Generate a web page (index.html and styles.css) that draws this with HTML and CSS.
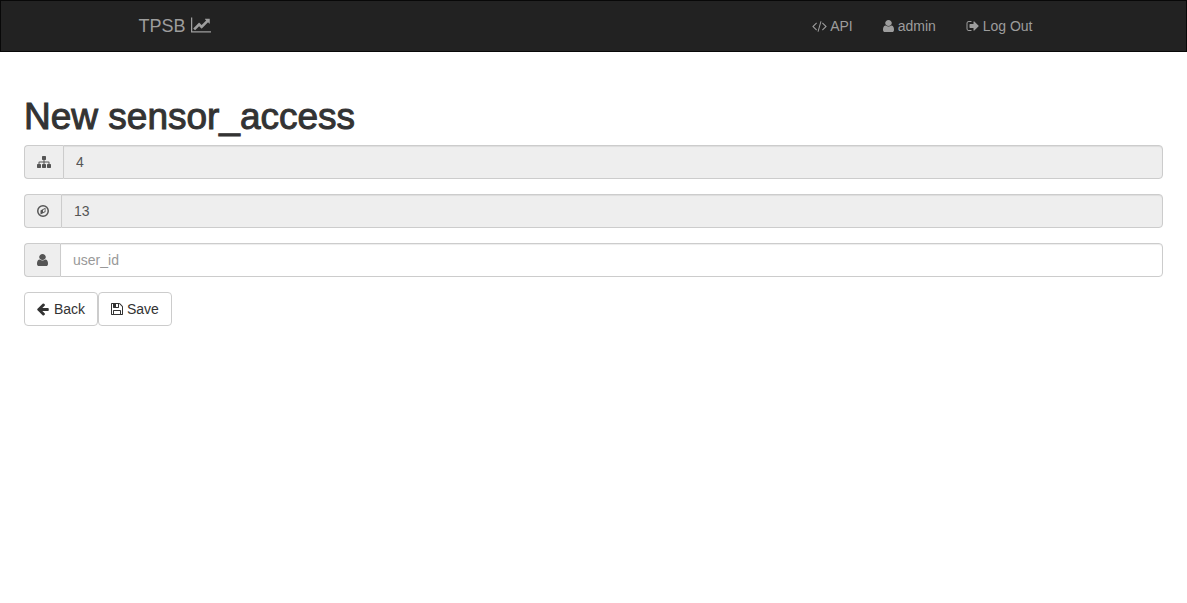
FILE: index.html
```html
<!DOCTYPE html>
<html lang="en">
<head>
<meta charset="utf-8">
<meta name="viewport" content="width=device-width, initial-scale=1">
<title>TPSB</title>
<link rel="stylesheet" href="styles.css">
</head>
<body>
<svg class="sprite" aria-hidden="true">
  <symbol id="user" viewBox="256 128 1280 1536" preserveAspectRatio="none"><path d="M1536 1399q0 109-62.5 187t-150.5 78h-854q-88 0-150.5-78t-62.5-187q0-85 8.5-160.5t31.5-152 58.5-131 94-89 134.5-34.5q131 128 313 128t313-128q76 0 134.5 34.5t94 89 58.5 131 31.5 152 8.5 160.5zm-256-887q0 159-112.5 271.5t-271.5 112.5-271.5-112.5-112.5-271.5 112.5-271.5 271.5-112.5 271.5 112.5 112.5 271.5z"/></symbol>
</svg>
<header class="navbar">
  <div class="navbar-inner">
    <a class="brand" href="#">TPSB <svg class="icon icon-chart" viewBox="0 0 2048 1792" aria-hidden="true"><path d="M2048 1536v128h-2048v-1536h128v1408h1920zm-128-1248v435q0 21-19.5 29.5t-35.5-7.5l-121-121-633 633q-10 10-23 10t-23-10l-233-233-416 416-192-192 585-585q10-10 23-10t23 10l233 233 464-464-121-121q-16-16-7.5-35.5t29.5-19.5h435q14 0 23 9t9 23z"/></svg></a>
    <nav class="nav">
      <a class="nav-link" href="#"><svg class="icon icon-code" viewBox="0 0 1920 1792" aria-hidden="true"><path d="M617 1399l-50 50q-10 10-23 10t-23-10l-466-466q-10-10-10-23t10-23l466-466q10-10 23-10t23 10l50 50q10 10 10 23t-10 23l-393 393 393 393q10 10 10 23t-10 23zm591-1067l-373 1291q-4 13-15.5 19.5t-23.5 2.5l-62-17q-13-4-19.5-15.5t-2.5-24.5l373-1291q4-13 15.5-19.5t23.5-2.5l62 17q13 4 19.5 15.5t2.5 24.5zm657 651l-466 466q-10 10-23 10t-23-10l-50-50q-10-10-10-23t10-23l393-393-393-393q-10-10-10-23t10-23l50-50q10-10 23-10t23 10l466 466q10 10 10 23t-10 23z"/></svg> API</a>
      <a class="nav-link" href="#"><svg class="icon icon-user" aria-hidden="true"><use href="#user"/></svg> admin</a>
      <a class="nav-link" href="#"><svg class="icon icon-wide" viewBox="0 0 1664 1792" aria-hidden="true"><path d="M704 1440q0 4 1 20t.5 26.5-3 23.5-10 19.5-20.5 6.5h-320q-119 0-203.5-84.5t-84.5-203.5v-704q0-119 84.5-203.5t203.5-84.5h320q13 0 22.5 9.5t9.5 22.5q0 4 1 20t.5 26.5-3 23.5-10 19.5-20.5 6.5h-320q-66 0-113 47t-47 113v704q0 66 47 113t113 47h312l11.5 1 11.5 3 8 5.5 7 9 2 13.5zm928-544q0 26-19 45l-544 544q-19 19-45 19t-45-19-19-45v-288h-448q-26 0-45-19t-19-45v-384q0-26 19-45t45-19h448v-288q0-26 19-45t45-19 45 19l544 544q19 19 19 45z"/></svg> Log Out</a>
    </nav>
  </div>
</header>
<main class="content">
  <h1 class="title">New sensor_access</h1>
  <form class="form">
    <div class="input-group">
      <label class="addon" for="network" aria-label="network_id"><svg class="icon icon-full" viewBox="0 0 1792 1792" aria-hidden="true"><path d="M1792 1248v320q0 40-28 68t-68 28h-320q-40 0-68-28t-28-68v-320q0-40 28-68t68-28h96v-192h-512v192h96q40 0 68 28t28 68v320q0 40-28 68t-68 28h-320q-40 0-68-28t-28-68v-320q0-40 28-68t68-28h96v-192h-512v192h96q40 0 68 28t28 68v320q0 40-28 68t-68 28h-320q-40 0-68-28t-28-68v-320q0-40 28-68t68-28h96v-192q0-52 38-90t90-38h512v-192h-96q-40 0-68-28t-28-68v-320q0-40 28-68t68-28h320q40 0 68 28t28 68v320q0 40-28 68t-68 28h-96v192h512q52 0 90 38t38 90v192h96q40 0 68 28t28 68z"/></svg></label>
      <input class="control" id="network" type="text" value="4" readonly>
    </div>
    <div class="input-group">
      <label class="addon" for="sensor" aria-label="sensor_id"><svg class="icon icon-narrow" viewBox="0 0 1536 1792" aria-hidden="true"><circle class="ring" cx="768" cy="896" r="672"/><path fill-rule="evenodd" d="M1088 480v530l-320 180-320 160v-530l320-180zM768 1050l220-120v-280l-220 120z"/></svg></label>
      <input class="control" id="sensor" type="text" value="13" readonly>
    </div>
    <div class="input-group">
      <label class="addon" for="user_id" aria-label="user_id"><svg class="icon icon-user" aria-hidden="true"><use href="#user"/></svg></label>
      <input class="control" id="user_id" type="text" placeholder="user_id">
    </div>
    <div class="actions">
      <button class="btn" type="button"><svg class="icon icon-wide" viewBox="160 0 1664 1792" aria-hidden="true"><path d="M1664 896v128q0 53-32.5 90.5t-84.5 37.5h-704l293 294q38 36 38 90t-38 90l-75 76q-37 37-90 37-52 0-91-37l-651-652q-37-37-37-90 0-52 37-91l651-650q38-38 91-38 52 0 90 38l75 74q38 38 38 91t-38 91l-293 293h704q52 0 84.5 37.5t32.5 90.5z"/></svg> Back</button>
      <button class="btn" type="submit"><svg class="icon icon-narrow" viewBox="128 0 1536 1792" aria-hidden="true"><path d="M512 1536h768v-384h-768v384zm896 0h128v-896q0-14-10-38.5t-20-34.5l-281-281q-10-10-34-20t-39-10v416q0 40-28 68t-68 28h-576q-40 0-68-28t-28-68v-416h-128v1280h128v-416q0-40 28-68t68-28h832q40 0 68 28t28 68v416zm-384-928v-320q0-13-9.5-22.5t-22.5-9.5h-192q-13 0-22.5 9.5t-9.5 22.5v320q0 13 9.5 22.5t22.5 9.5h192q13 0 22.5-9.5t9.5-22.5zm640 32v928q0 40-28 68t-68 28h-1344q-40 0-68-28t-28-68v-1344q0-40 28-68t68-28h928q40 0 88 20t76 48l280 280q28 28 48 76t20 88z"/></svg> Save</button>
    </div>
  </form>
</main>
</body>
</html>
```
FILE: styles.css
```css
*, *::before, *::after { box-sizing: border-box; }

body {
  margin: 0;
  background: #fff;
  color: #333;
  font: 14px/20px "Liberation Sans", Arial, sans-serif;
}

.sprite { display: none; }

.icon {
  height: 14px;
  fill: currentColor;
  vertical-align: -2px;
}
.icon-full { width: 14px; }
.icon-wide { width: 13px; }
.icon-narrow { width: 12px; }
.icon-code { width: 15px; }
.icon-user { width: 11px; height: 12px; vertical-align: -1px; }
.icon-chart { width: 20px; height: 18px; vertical-align: -2px; }
.ring { fill: none; stroke: currentColor; stroke-width: 190; }

.navbar {
  background: #222;
  border: 1px solid #080808;
}
.navbar-inner {
  display: flex;
  justify-content: space-between;
  max-width: 970px;
  margin: 0 auto;
  padding: 0 31px 0 30px;
}
.brand, .nav-link {
  color: #9d9d9d;
  text-decoration: none;
  padding-top: 15px;
  padding-bottom: 15px;
}
.brand { font-size: 18px; }
.nav { display: flex; }
.nav-link { padding-left: 15px; padding-right: 15px; }

.content { padding: 45px 24px; }

.title {
  margin: 0 0 8px;
  color: #333;
  font-size: 37px;
  font-weight: 400;
  line-height: 40px;
  -webkit-text-stroke: 1px #333;
}

.form {
  display: flex;
  flex-direction: column;
  gap: 15px;
}
.input-group { display: flex; }
.addon {
  display: flex;
  align-items: center;
  padding: 0 12px;
  color: #555;
  background: #eee;
  border: 1px solid #ccc;
  border-right: 0;
  border-radius: 4px 0 0 4px;
}
.control {
  flex: 1;
  min-width: 0;
  height: 34px;
  padding: 6px 12px;
  color: #555;
  background: #fff;
  border: 1px solid #ccc;
  border-radius: 0 4px 4px 0;
  box-shadow: inset 0 1px 1px rgba(0, 0, 0, .075);
  font: inherit;
}
.control:read-only { background: #eee; }
.control::placeholder { color: #999; opacity: 1; }

.actions { display: flex; }
.btn {
  height: 34px;
  padding: 0 12px;
  color: #333;
  background: #fff;
  border: 1px solid #ccc;
  border-radius: 4px;
  font: inherit;
  white-space: nowrap;
}
```
